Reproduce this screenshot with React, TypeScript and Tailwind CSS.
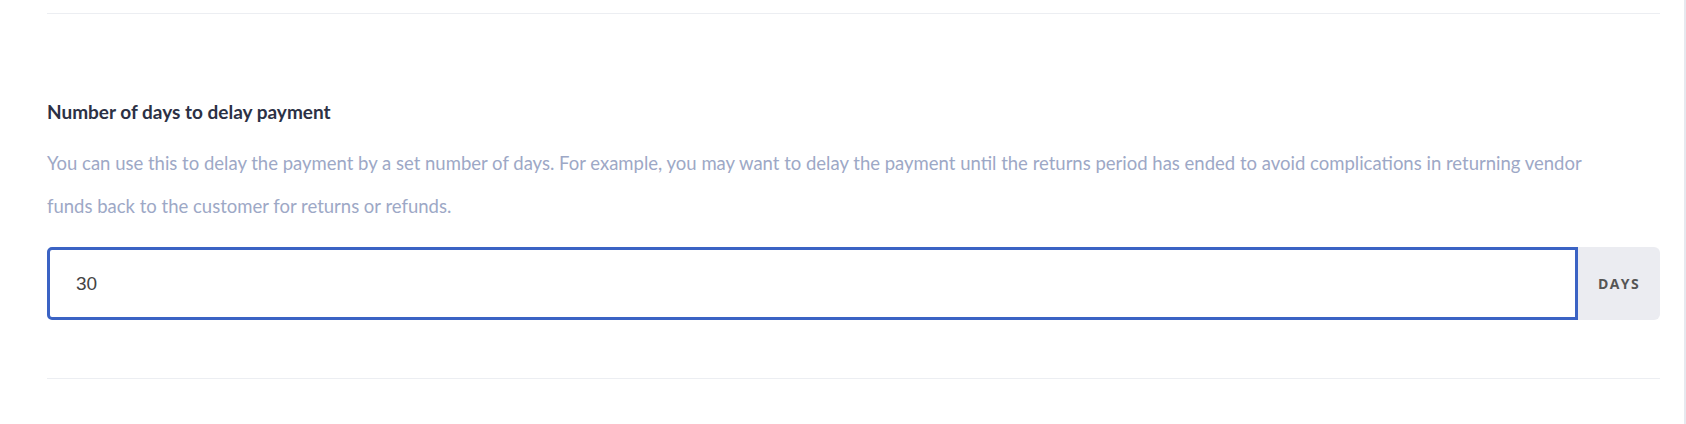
export default function App() {
  return (
    <div className="flex h-[424px] w-full bg-white">
      <div className="flex-1 pl-[47px] pr-[24px] pt-[13px]">
        <div className="h-px bg-[#eceef2]" />

        <section className="pt-[85px] pb-[58px]">
          <h3 className="font-['Lato',sans-serif] text-[19px] leading-[26px] font-bold text-[#2c3145]">
            Number of days to delay payment
          </h3>
          <p className="mt-[17px] max-w-[1570px] font-['Lato',sans-serif] text-[18.5px] leading-[43px] text-[#9da8c6]">
            You can use this to delay the payment by a set number of days. For example, you may want to delay the payment until the returns period has ended to avoid complications in returning vendor funds back to the customer for returns or refunds.
          </p>

          <div className="mt-[19px] flex h-[73px]">
            <input
              type="text"
              defaultValue="30"
              className="h-full flex-1 rounded-l-[5px] border-[3px] border-[#3b63c4] bg-white pl-[26px] font-['Liberation_Sans',Arial,sans-serif] text-[19px] text-[#444] outline-none"
            />
            <div className="flex w-[82px] items-center justify-center rounded-r-[6px] bg-[#ebecf1] font-['Open_Sans',sans-serif] text-[14px] font-bold tracking-[0.1em] text-[#555]">
              DAYS
            </div>
          </div>
        </section>

        <div className="h-px bg-[#eceef2]" />
      </div>
      <div className="w-[2px] bg-[#e6e9ef]" />
    </div>
  );
}
